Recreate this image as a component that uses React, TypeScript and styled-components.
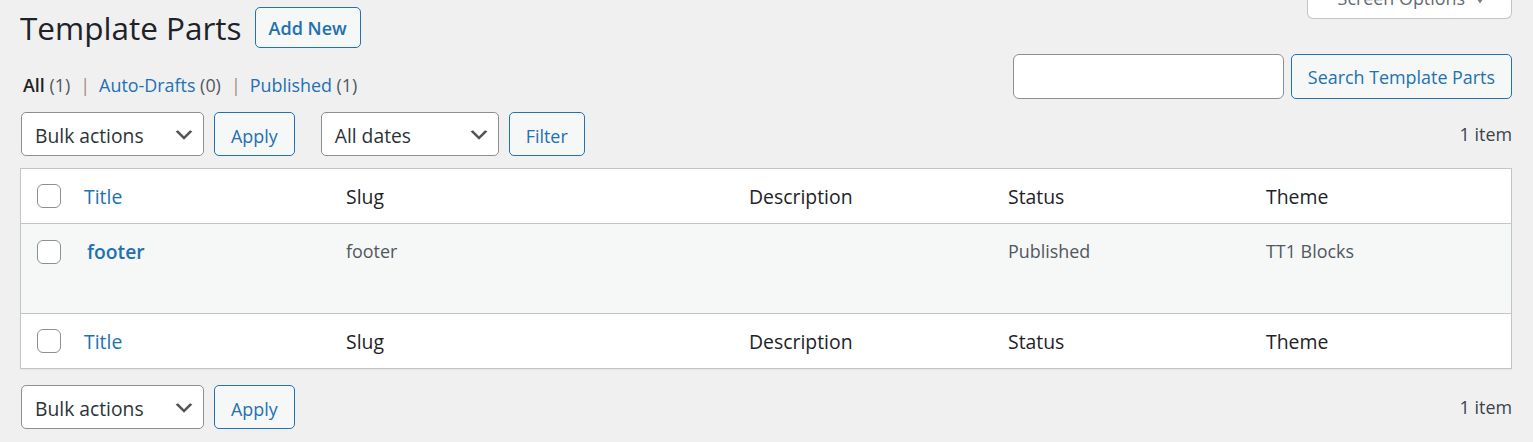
import React from "react";
import styled, { createGlobalStyle } from "styled-components";

// Page-wide defaults: admin grey background and the sans stack.
const GlobalStyle = createGlobalStyle`
  html, body {
    margin: 0;
    padding: 0;
    background: #f0f0f1;
  }
  body {
    font-family: "Open Sans", "Noto Sans", sans-serif;
    font-size: 17.9px;
    color: #3c434a;
  }
  * {
    box-sizing: border-box;
  }
`;

interface Column {
  key: string;
  label: string;
  width?: number;
  sortable?: boolean;
}

const columns: Column[] = [
  { key: "title", label: "Title", width: 262, sortable: true },
  { key: "slug", label: "Slug", width: 403 },
  { key: "description", label: "Description", width: 259 },
  { key: "status", label: "Status", width: 258 },
  { key: "theme", label: "Theme" },
];

const rows = [
  {
    title: "footer",
    slug: "footer",
    description: "",
    status: "Published",
    theme: "TT1 Blocks",
  },
];

const views = [
  { label: "All", count: 1, current: true },
  { label: "Auto-Drafts", count: 0 },
  { label: "Published", count: 1 },
];

const Wrap = styled.div`
  padding: 0 21px 0 20px;
`;

const HeaderRow = styled.div`
  display: flex;
  justify-content: space-between;
  align-items: flex-start;
`;

const TitleGroup = styled.div`
  display: flex;
  align-items: center;
  gap: 13px;
  padding-top: 7px;
`;

const PageTitle = styled.h1`
  margin: 0;
  font-size: 31.5px;
  font-weight: 400;
  line-height: 41px;
  color: #1d2327;
`;

// Outlined secondary button used for Add New, Apply, Filter and Search.
const OutlineButton = styled.button<{
  $strong?: boolean;
  $height?: number;
  $drop?: number;
}>`
  display: inline-flex;
  align-items: center;
  justify-content: center;
  height: ${({ $height }) => $height ?? 44}px;
  padding: ${({ $drop }) => $drop ?? 0}px
    ${({ $strong }) => ($strong ? 13 : 16)}px 0;
  border: 1px solid #2271b1;
  border-radius: 5px;
  background: #f6f7f7;
  color: #2271b1;
  font-family: inherit;
  font-size: ${({ $strong }) => ($strong ? 18 : 17.9)}px;
  font-weight: ${({ $strong }) => ($strong ? 600 : 400)};
  white-space: nowrap;
  cursor: pointer;
`;

// The "Screen Options" tab hanging from the top edge.
const ScreenOptionsTab = styled.button`
  display: flex;
  align-items: flex-end;
  height: 19px;
  padding: 0 16px 8px 30px;
  border: 1px solid #c3c4c7;
  border-top: 0;
  border-radius: 0 0 6px 6px;
  background: #fff;
  color: #646970;
  font-family: inherit;
  font-size: 17.9px;
  line-height: 24px;
  white-space: nowrap;
`;

const TabArrow = styled.svg`
  flex: none;
  display: block;
`;

const FilterRow = styled.div`
  display: flex;
  justify-content: space-between;
  align-items: flex-end;
  margin-top: 6px;
`;

const ViewList = styled.ul`
  display: flex;
  margin: 0;
  padding: 0 0 0 3px;
  list-style: none;
  font-size: 17.9px;
  line-height: 27px;
  color: #646970;
`;

const ViewItem = styled.li`
  white-space: pre;
`;

const ViewLink = styled.a<{ $current?: boolean }>`
  color: ${({ $current }) => ($current ? "#1d2327" : "#2271b1")};
  font-weight: ${({ $current }) => ($current ? 600 : 400)};
  text-decoration: none;
`;

const Count = styled.span`
  color: #50575e;
  font-weight: 400;
`;

const Separator = styled.span`
  color: #a08f80;
  padding: 0 9px 0 10px;
`;

const SearchBox = styled.div`
  display: flex;
  gap: 7px;
`;

const SearchInput = styled.input`
  width: 271px;
  height: 45px;
  margin: 0;
  border: 1px solid #8c8f94;
  border-radius: 6px;
  background: #fff;
  font-family: inherit;
  font-size: 17.9px;
`;

const Tablenav = styled.div<{ $top: number }>`
  display: flex;
  align-items: center;
  height: 44px;
  margin-top: ${({ $top }) => $top}px;
  padding-left: 1px;
`;

const ActionGroup = styled.div<{ $gap?: number }>`
  display: flex;
  gap: 10px;
  margin-left: ${({ $gap }) => $gap ?? 0}px;
`;

const SelectBox = styled.div<{ $width: number }>`
  display: flex;
  align-items: center;
  justify-content: space-between;
  width: ${({ $width }) => $width}px;
  height: 44px;
  padding: 3px 7px 0 13px;
  border: 1px solid #8c8f94;
  border-radius: 5px;
  background: #fff;
  color: #2c3338;
  font-size: 19.3px;
`;

const Chevron = styled.svg`
  display: block;
  margin-top: -1px;
`;

const DisplayingNum = styled.span`
  margin-left: auto;
  color: #3c434a;
  font-size: 17.9px;
`;

const ListTable = styled.table`
  width: 100%;
  margin-top: 12px;
  border: 1px solid #c3c4c7;
  border-spacing: 0;
  border-collapse: separate;
  table-layout: fixed;
  background: #fff;
  box-shadow: 0 1px 1px rgba(0, 0, 0, 0.04);
`;

const HeadCell = styled.th<{ $pos: "head" | "foot" }>`
  height: 54px;
  padding: 13px 15px 11px;
  text-align: left;
  font-weight: 400;
  font-size: 19.4px;
  line-height: 30px;
  color: #1d2327;
  ${({ $pos }) =>
    $pos === "head"
      ? "border-bottom: 1px solid #c3c4c7;"
      : "border-top: 1px solid #c3c4c7;"}
`;

const CheckHeadCell = styled(HeadCell)`
  padding: 0 0 0 16px;
  vertical-align: middle;
`;

const SortLink = styled.a`
  color: #2271b1;
  text-decoration: none;
`;

const BodyCell = styled.td`
  height: 89px;
  padding: 13px 15px 0;
  vertical-align: top;
  font-size: 17.9px;
  line-height: 29px;
  color: #50575e;
  background: #f6f7f7;
`;

const CheckBodyCell = styled(BodyCell)`
  padding: 16px 0 0 16px;
`;

const RowTitle = styled.a`
  margin-left: 3px;
  color: #2271b1;
  font-size: 19.3px;
  font-weight: 600;
  line-height: 1;
  vertical-align: -1px;
  text-decoration: none;
`;

const Checkbox = styled.input.attrs({ type: "checkbox" })`
  appearance: none;
  display: block;
  width: 24px;
  height: 24px;
  margin: 0;
  border: 1px solid #8c8f94;
  border-radius: 6px;
  background: #fff;
`;

const ChevronIcon = () => (
  <Chevron width="24" height="24" viewBox="0 0 20 20">
    <path d="M5 6l5 5 5-5 2 1-7 7-7-7 2-1z" fill="#555" />
  </Chevron>
);

const Select: React.FC<{ label: string; width: number }> = ({ label, width }) => (
  <SelectBox $width={width}>
    <span>{label}</span>
    <ChevronIcon />
  </SelectBox>
);

const HeaderCells: React.FC<{ pos: "head" | "foot" }> = ({ pos }) => (
  <tr>
    <CheckHeadCell $pos={pos}>
      <Checkbox aria-label="Select all" />
    </CheckHeadCell>
    {columns.map((col) => (
      <HeadCell key={col.key} $pos={pos}>
        {col.sortable ? <SortLink href="#">{col.label}</SortLink> : col.label}
      </HeadCell>
    ))}
  </tr>
);

export default function App() {
  return (
    <>
      <GlobalStyle />
      <Wrap>
        <HeaderRow>
          <TitleGroup>
            <PageTitle>Template Parts</PageTitle>
            <OutlineButton $strong $height={41}>
              Add New
            </OutlineButton>
          </TitleGroup>
          <ScreenOptionsTab>
            <span>Screen Options</span>
            <TabArrow width="30" height="24" viewBox="0 0 30 24">
              <path d="M9 8.5h12l-6 9z" fill="#787c82" />
            </TabArrow>
          </ScreenOptionsTab>
        </HeaderRow>

        <FilterRow>
          <ViewList>
            {views.map((view, index) => (
              <ViewItem key={view.label}>
                <ViewLink href="#" $current={view.current}>
                  {view.label} <Count>({view.count})</Count>
                </ViewLink>
                {index < views.length - 1 && <Separator>|</Separator>}
              </ViewItem>
            ))}
          </ViewList>
          <SearchBox>
            <SearchInput aria-label="Search Template Parts" />
            <OutlineButton $height={45}>Search Template Parts</OutlineButton>
          </SearchBox>
        </FilterRow>

        <Tablenav $top={13}>
          <ActionGroup>
            <Select label="Bulk actions" width={183} />
            <OutlineButton $drop={3}>Apply</OutlineButton>
          </ActionGroup>
          <ActionGroup $gap={26}>
            <Select label="All dates" width={178} />
            <OutlineButton $drop={3}>Filter</OutlineButton>
          </ActionGroup>
          <DisplayingNum>1 item</DisplayingNum>
        </Tablenav>

        <ListTable>
          <colgroup>
            <col style={{ width: 48 }} />
            {columns.map((col) => (
              <col key={col.key} style={col.width ? { width: col.width } : undefined} />
            ))}
          </colgroup>
          <thead>
            <HeaderCells pos="head" />
          </thead>
          <tbody>
            {rows.map((row) => (
              <tr key={row.slug}>
                <CheckBodyCell>
                  <Checkbox aria-label={`Select ${row.title}`} />
                </CheckBodyCell>
                <BodyCell>
                  <strong>
                    <RowTitle href="#">{row.title}</RowTitle>
                  </strong>
                </BodyCell>
                <BodyCell>{row.slug}</BodyCell>
                <BodyCell>{row.description}</BodyCell>
                <BodyCell>{row.status}</BodyCell>
                <BodyCell>{row.theme}</BodyCell>
              </tr>
            ))}
          </tbody>
          <tfoot>
            <HeaderCells pos="foot" />
          </tfoot>
        </ListTable>

        <Tablenav $top={16}>
          <ActionGroup>
            <Select label="Bulk actions" width={183} />
            <OutlineButton $drop={3}>Apply</OutlineButton>
          </ActionGroup>
          <DisplayingNum>1 item</DisplayingNum>
        </Tablenav>
      </Wrap>
    </>
  );
}
